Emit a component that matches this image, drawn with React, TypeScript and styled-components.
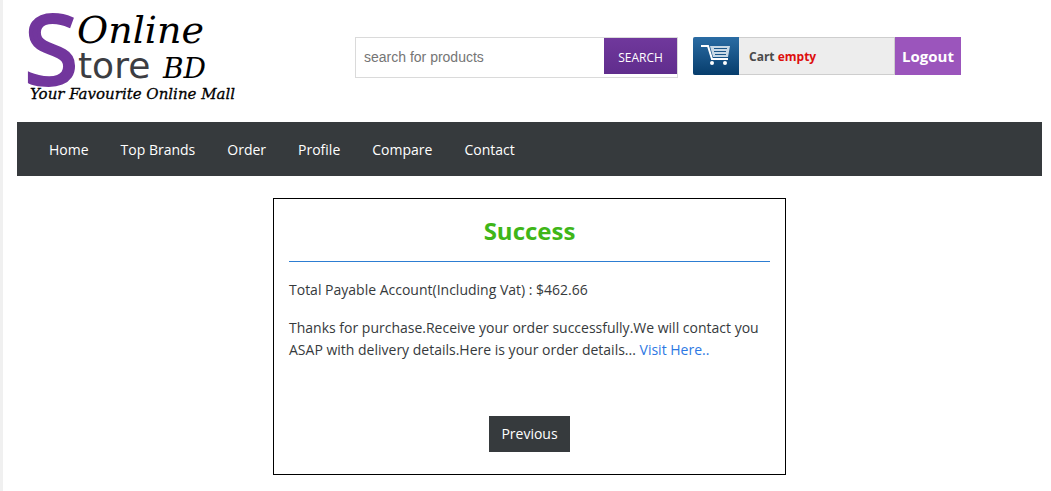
import React from 'react';
import styled, { createGlobalStyle } from 'styled-components';

const GlobalStyle = createGlobalStyle`
  *, *::before, *::after { box-sizing: border-box; }
  body {
    margin: 0;
    background: #f0f0f0;
    color: #363a3c;
    font-family: 'Segoe UI', 'Open Sans', 'Noto Sans', sans-serif;
  }
`;

const Page = styled.div`
  min-height: 100vh;
  margin-left: 3px;
  padding: 0 9px 16px 14px;
  background: #fff;
`;

const Header = styled.header`
  display: flex;
  align-items: flex-start;
  height: 122px;
`;

const LogoLink = styled.a`
  display: block;
  flex: none;
  width: 338px;
  svg { display: block; overflow: visible; }
`;

const SearchForm = styled.form`
  display: flex;
  align-items: flex-start;
  flex: none;
  width: 323px;
  height: 41px;
  margin-top: 37px;
  border: 1px solid #dadada;
`;

const SearchInput = styled.input`
  flex: 1;
  min-width: 0;
  height: 38px;
  padding: 0 8px;
  border: 0;
  background: none;
  font: 14px 'Liberation Sans', Arial, sans-serif;
  &::placeholder { color: #757575; opacity: 1; }
`;

const SearchButton = styled.button`
  width: 73px;
  height: 36px;
  padding: 2px 0 0;
  border: 0;
  background: linear-gradient(#70389c, #602d8d);
  color: #fff;
  font-family: inherit;
  font-size: 12px;
`;

const CartLink = styled.a`
  display: flex;
  flex: none;
  width: 202px;
  height: 38px;
  margin: 37px 0 0 15px;
  border: 1px solid #cecece;
  border-width: 1px 1px 1px 0;
  border-radius: 2px 0 0 2px;
  background: #ededed;
  color: #4a4a4a;
  font-size: 12px;
  font-weight: 700;
  line-height: 38px;
  text-decoration: none;
`;

const CartIcon = styled.span`
  width: 46px;
  height: 38px;
  margin: -1px 10px -1px 0;
  border-radius: 2px 0 0 2px;
  background: linear-gradient(#2a6ca4, #073d6c);
  svg { display: block; }
`;

const CartState = styled.span`
  color: #dd0f0e;
`;

const LogoutLink = styled.a`
  flex: none;
  width: 66px;
  height: 38px;
  margin-top: 37px;
  background: #9b55bc;
  color: #fff;
  font-size: 15px;
  font-weight: 700;
  line-height: 38px;
  text-align: center;
  text-decoration: none;
`;

const Nav = styled.nav`
  display: flex;
  gap: 32px;
  height: 54px;
  padding: 0 32px;
  background: #363a3d;
`;

const NavLink = styled.a`
  color: #fff;
  font-size: 14px;
  line-height: 56px;
  text-decoration: none;
`;

const Card = styled.main`
  width: 50%;
  min-width: 513px;
  margin: 22px auto 0;
  padding: 15px;
  border: 1px solid #000;
  font-size: 14px;
  line-height: 22px;
`;

const Title = styled.h2`
  margin: 0 0 17px;
  padding-bottom: 14px;
  border-bottom: 1px solid #2d7dd2;
  color: #3fb618;
  font-size: 24px;
  line-height: 33px;
  text-align: center;
`;

const Message = styled.p`
  margin: 0 0 16px;
`;

const DetailsLink = styled.a`
  color: #2d78e3;
  text-decoration: none;
`;

const Actions = styled.div`
  display: flex;
  justify-content: center;
  padding: 39px 0 7px;
`;

const PreviousLink = styled.a`
  width: 81px;
  background: #363a3d;
  color: #fff;
  line-height: 36px;
  text-align: center;
  text-decoration: none;
`;

const links = ['Home', 'Top Brands', 'Order', 'Profile', 'Compare', 'Contact'];

function Logo() {
  return (
    <svg width="230" height="112" viewBox="0 0 230 112" role="img" aria-label="Online Store BD">
      <g fontFamily="'Lucida Handwriting', 'DejaVu Serif', serif" fontStyle="italic" fill="#000">
        <text x="60" y="43" fontSize="38">Online</text>
        <text x="146" y="78" fontSize="28">BD</text>
        <text x="13" y="99" fontSize="15" stroke="#000" strokeWidth="0.3">Your Favourite Online Mall</text>
      </g>
      <text x="8" y="84" fontFamily="'Open Sans', sans-serif" fontSize="96" fill="#72369d" stroke="#72369d" strokeWidth="4">S</text>
      <text x="61" y="78" fontFamily="'DejaVu Sans', sans-serif" fontSize="36" fill="#3c3d42">tore</text>
    </svg>
  );
}

function Cart() {
  return (
    <svg width="46" height="38" viewBox="0 0 46 38" aria-hidden="true">
      <path d="M17 9h20l-2 11H20z" fill="#c9d9e6" />
      <path d="M21 11.500h13M21 14.500h12M22 17.500h11" stroke="#1b5688" strokeWidth="1" />
      <path d="M8 9h7l4 13h16" fill="none" stroke="#fff" strokeWidth="2" />
      <circle cx="19" cy="26" r="2" fill="#fff" />
      <circle cx="32" cy="26" r="2" fill="#fff" />
    </svg>
  );
}

export default function App() {
  return (
    <>
      <GlobalStyle />
      <Page>
        <Header>
          <LogoLink href="#"><Logo /></LogoLink>
          <SearchForm onSubmit={(e) => e.preventDefault()}>
            <SearchInput type="text" placeholder="search for products" aria-label="search for products" />
            <SearchButton type="submit">SEARCH</SearchButton>
          </SearchForm>
          <CartLink href="#">
            <CartIcon><Cart /></CartIcon>
            <span>Cart <CartState>empty</CartState></span>
          </CartLink>
          <LogoutLink href="#">Logout</LogoutLink>
        </Header>
        <Nav>
          {links.map((label) => <NavLink key={label} href="#">{label}</NavLink>)}
        </Nav>
        <Card>
          <Title>Success</Title>
          <Message>Total Payable Account(Including Vat) : $462.66</Message>
          <Message>
            Thanks for purchase.Receive your order successfully.We will contact you ASAP with
            delivery details.Here is your order details... <DetailsLink href="#">Visit Here..</DetailsLink>
          </Message>
          <Actions><PreviousLink href="#">Previous</PreviousLink></Actions>
        </Card>
      </Page>
    </>
  );
}
